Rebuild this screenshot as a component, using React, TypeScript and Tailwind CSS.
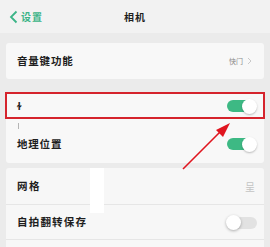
import React from "react";

const cjk = { fontFamily: '"Noto Sans CJK SC", "Noto Sans", sans-serif' };

function Toggle({ on }: { on: boolean }) {
  return on ? (
    <div className="relative h-[14px] w-[30px]">
      <div className="absolute left-0 top-[1px] h-[12px] w-[26px] rounded-full bg-[#3db984]" />
      <div className="absolute right-0 top-0 h-[15px] w-[15px] rounded-full bg-white shadow-[0_1px_2px_rgba(0,0,0,0.25)]" />
    </div>
  ) : (
    <div className="relative h-[15px] w-[31px]">
      <div className="absolute right-0 top-[2px] h-[12px] w-[26px] rounded-full bg-[#e2e2e2]" />
      <div className="absolute left-0 top-0 h-[15px] w-[15px] rounded-full bg-white shadow-[0_1px_3px_rgba(0,0,0,0.3)]" />
    </div>
  );
}

export default function App() {
  return (
    <div
      className="relative h-[247px] w-[270px] overflow-hidden bg-[#ebebeb] text-[#1e1e1e]"
      style={cjk}
    >
      {/* header */}
      <div className="relative flex h-[33px] items-center bg-[#f2f2f2]">
        <div className="flex items-center pl-[9px] text-[#3bb487]">
          <svg width="9" height="14" viewBox="0 0 9 14" fill="none">
            <path d="M7.5 1.5 L2 7 L7.5 12.5" stroke="#3bb487" strokeWidth="1.8" />
          </svg>
          <span className="ml-[3px] text-[10px] font-semibold tracking-[1px]">设置</span>
        </div>
        <span className="absolute left-1/2 -translate-x-1/2 text-[10px] font-bold tracking-[1px]">相机</span>
      </div>

      <div className="flex flex-col px-[6px] pt-[10px]">
        {/* card 1 */}
        <div className="flex h-[36px] items-center justify-between rounded-[3px] bg-[#f8f8f8] pl-[11px] pr-[12px]">
          <span className="text-[10.5px] font-bold tracking-[0.8px]">音量键功能</span>
          <span className="flex items-center gap-[4px] text-[7px] text-[#8a8a8a]">
            快门
            <svg width="5" height="8" viewBox="0 0 5 8" fill="none">
              <path d="M1 1 L4 4 L1 7" stroke="#c9c9c9" strokeWidth="1" />
            </svg>
          </span>
        </div>

        {/* card 2 */}
        <div className="mt-[13px] flex h-[71px] flex-col rounded-[3px] bg-[#f8f8f8]">
          <div className="relative flex h-[27px] items-center justify-between pl-[11px] pr-[7px]">
            <div className="absolute -inset-x-[1px] inset-y-0 border-2 border-[#d5232c]" />
            <span className="text-[10px] font-bold">ɫ</span>
            <Toggle on />
          </div>
          <div className="relative flex flex-1 items-center justify-between pl-[11px] pr-[7px] pt-[6px]">
            <div className="absolute left-[12px] top-[4px] h-[6px] w-[1px] bg-[#b5b5b5]" />
            <span className="text-[10.5px] font-bold tracking-[0.8px]">地理位置</span>
            <Toggle on />
          </div>
        </div>

        {/* card 3 */}
        <div className="mt-[5px] flex flex-col rounded-[3px] bg-[#f7f7f7]">
          <div className="relative flex h-[37px] items-center justify-between border-b border-[#e6e6e6] pl-[11px] pr-[9px]">
            <span className="text-[10.5px] font-bold tracking-[1.5px]">网格</span>
            <span className="text-[10px] text-[#c4c4c4]">呈</span>
          </div>
          <div className="flex h-[35px] items-center justify-between border-b border-[#e6e6e6] pl-[11px] pr-[7px]">
            <span className="text-[10.5px] font-bold tracking-[1.2px]">自拍翻转保存</span>
            <Toggle on={false} />
          </div>
          <div className="h-[10px]" />
        </div>
      </div>

      {/* white patch */}
      <div className="absolute left-[90px] top-[168px] h-[45px] w-[14px] bg-white" />

      {/* arrow annotation */}
      <svg className="absolute left-0 top-0" width="270" height="247" viewBox="0 0 270 247">
        <line x1="183" y1="169" x2="222" y2="130" stroke="#e0151f" strokeWidth="1.6" />
        <polygon points="230,123 216,130 223,137" fill="#e0151f" />
      </svg>
    </div>
  );
}
